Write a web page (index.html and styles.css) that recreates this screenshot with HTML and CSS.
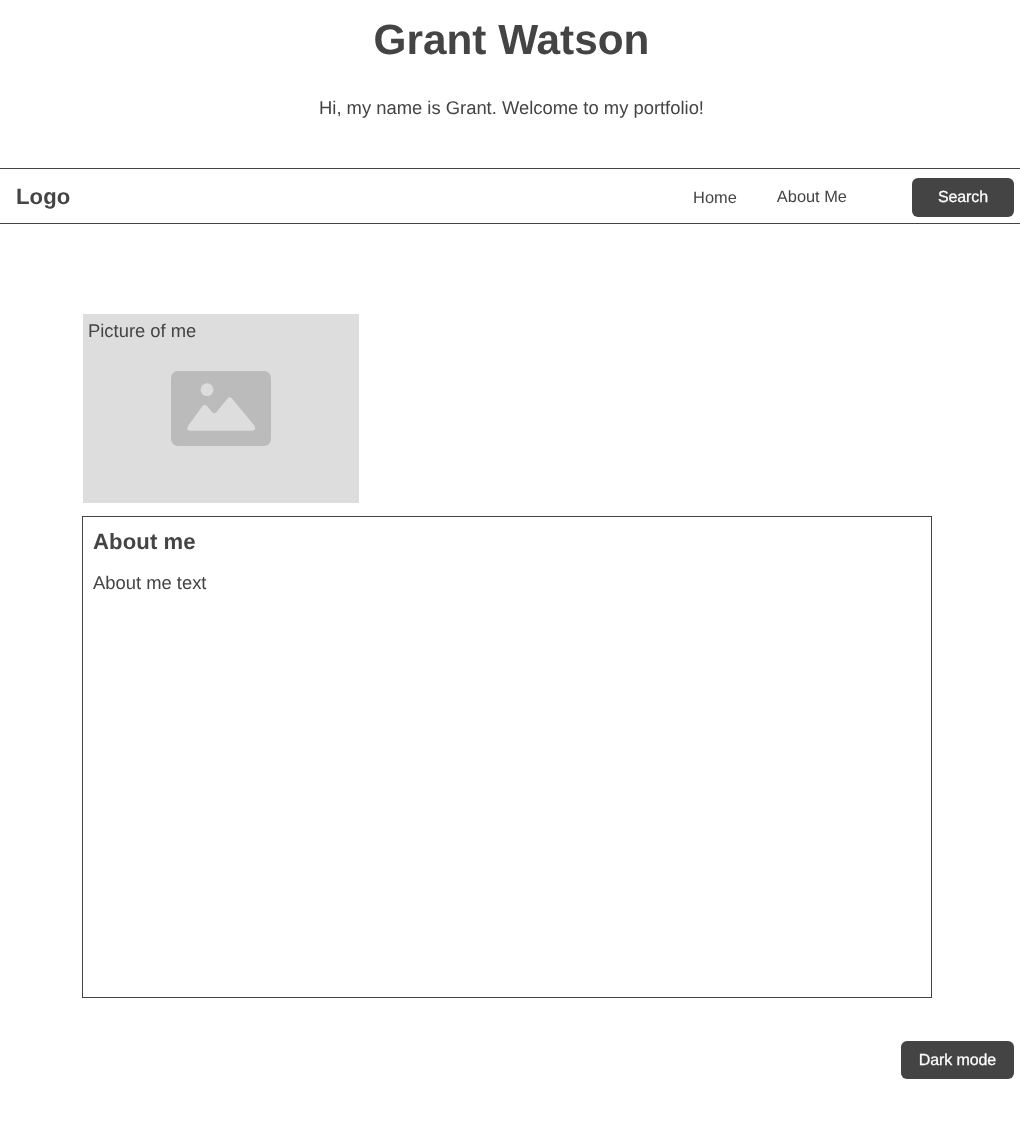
FILE: index.html
```html
<!DOCTYPE html>
<html lang="en">
<head>
<meta charset="utf-8">
<title>Grant Watson</title>
<link rel="stylesheet" href="styles.css">
</head>
<body>
<div class="page">
<header class="hero">
  <h1 class="hero-title">Grant Watson</h1>
  <p class="hero-sub">Hi, my name is Grant. Welcome to my portfolio!</p>
</header>
<nav class="nav">
  <div class="logo">Logo</div>
  <a class="nav-link nav-home">Home</a>
  <a class="nav-link nav-about">About Me</a>
  <button class="btn btn-search">Search</button>
</nav>
<main class="main">
  <div class="picture">
    <span class="picture-label">Picture of me</span>
    <svg class="picture-icon" width="100" height="75" viewBox="0 0 100 75">
      <rect width="100" height="75" rx="7" fill="#bbb"/>
      <circle cx="36" cy="18.700" r="6.400" fill="#ddd"/>
      <path d="M17 55 L31.500 35 Q33.700 32.800 36 35 L41.300 41.300 Q43.300 43.300 45.300 41.300 L56.500 27.500 Q58.700 25 61 27.500 L83.300 54.500 Q86 59.700 80.500 59.700 L19.500 59.700 Q14.500 59.700 17 55 Z" fill="#ddd"/>
    </svg>
  </div>
  <section class="about">
    <h2 class="about-title">About me</h2>
    <p class="about-text">About me text</p>
  </section>
</main>
<footer class="footer">
  <button class="btn btn-dark">Dark mode</button>
</footer>
</div>
</body>
</html>
```
FILE: styles.css
```css
* { box-sizing: border-box; }
html, body { margin: 0; padding: 0; }
body {
  background: #fff;
  color: #444;
  font-family: "Liberation Sans", Arial, sans-serif;
  font-size: 18.4px;
  text-rendering: geometricPrecision;
}
.page { height: 1132px; will-change: opacity; }
.hero { height: 168px; padding-top: 16px; text-align: center; }
.hero-title {
  margin: 0 0 0 3px;
  font-size: 42.32px;
  line-height: 48px;
  font-weight: 700;
}
.hero-sub {
  margin: 33px 0 0 3px;
  font-size: 18.4px;
  line-height: 22px;
}
.nav {
  display: flex;
  align-items: center;
  height: 56px;
  padding: 0 6px 0 16px;
  border-top: 1px solid #444;
  border-bottom: 1px solid #444;
}
.logo { margin-right: auto; font-size: 22.08px; font-weight: 700; letter-spacing: 0.1px; padding-top: 2px; }
.nav-link { font-size: 16.4px; line-height: 20px; }
.nav-home { margin-right: 40px; padding-top: 3px; }
.nav-about { margin-right: 65px; padding-top: 2px; }
.btn {
  border: 0;
  border-radius: 6px;
  background: #444;
  color: #fff;
  font-family: inherit;
  font-size: 16px;
  letter-spacing: -0.1px;
  -webkit-text-stroke: 0.25px #fff;
  text-rendering: geometricPrecision;
  padding: 2px 0 0;
}
.btn-search { width: 102px; height: 39px; margin-top: 2px; }
.btn-dark { width: 113px; height: 38px; }
.main { padding: 90px 88px 0 82px; }
.picture {
  display: flex;
  align-items: center;
  justify-content: center;
  position: relative;
  width: 276px;
  height: 189px;
  margin-left: 1px;
  background: #ddd;
}
.picture-label {
  position: absolute;
  left: 5px;
  top: 6px;
  font-size: 18.4px;
  line-height: 22px;
}
.picture-icon { display: block; }
.about {
  height: 482px;
  margin-top: 13px;
  padding: 11px 10px;
  border: 1px solid #444;
}
.about-title { margin: 0; font-size: 22.08px; line-height: 27px; font-weight: 700; letter-spacing: 0.12px; }
.about-text { margin: 17px 0 0; font-size: 18.4px; line-height: 22px; }
.footer { display: flex; justify-content: flex-end; padding: 43px 6px 0 0; }
```
